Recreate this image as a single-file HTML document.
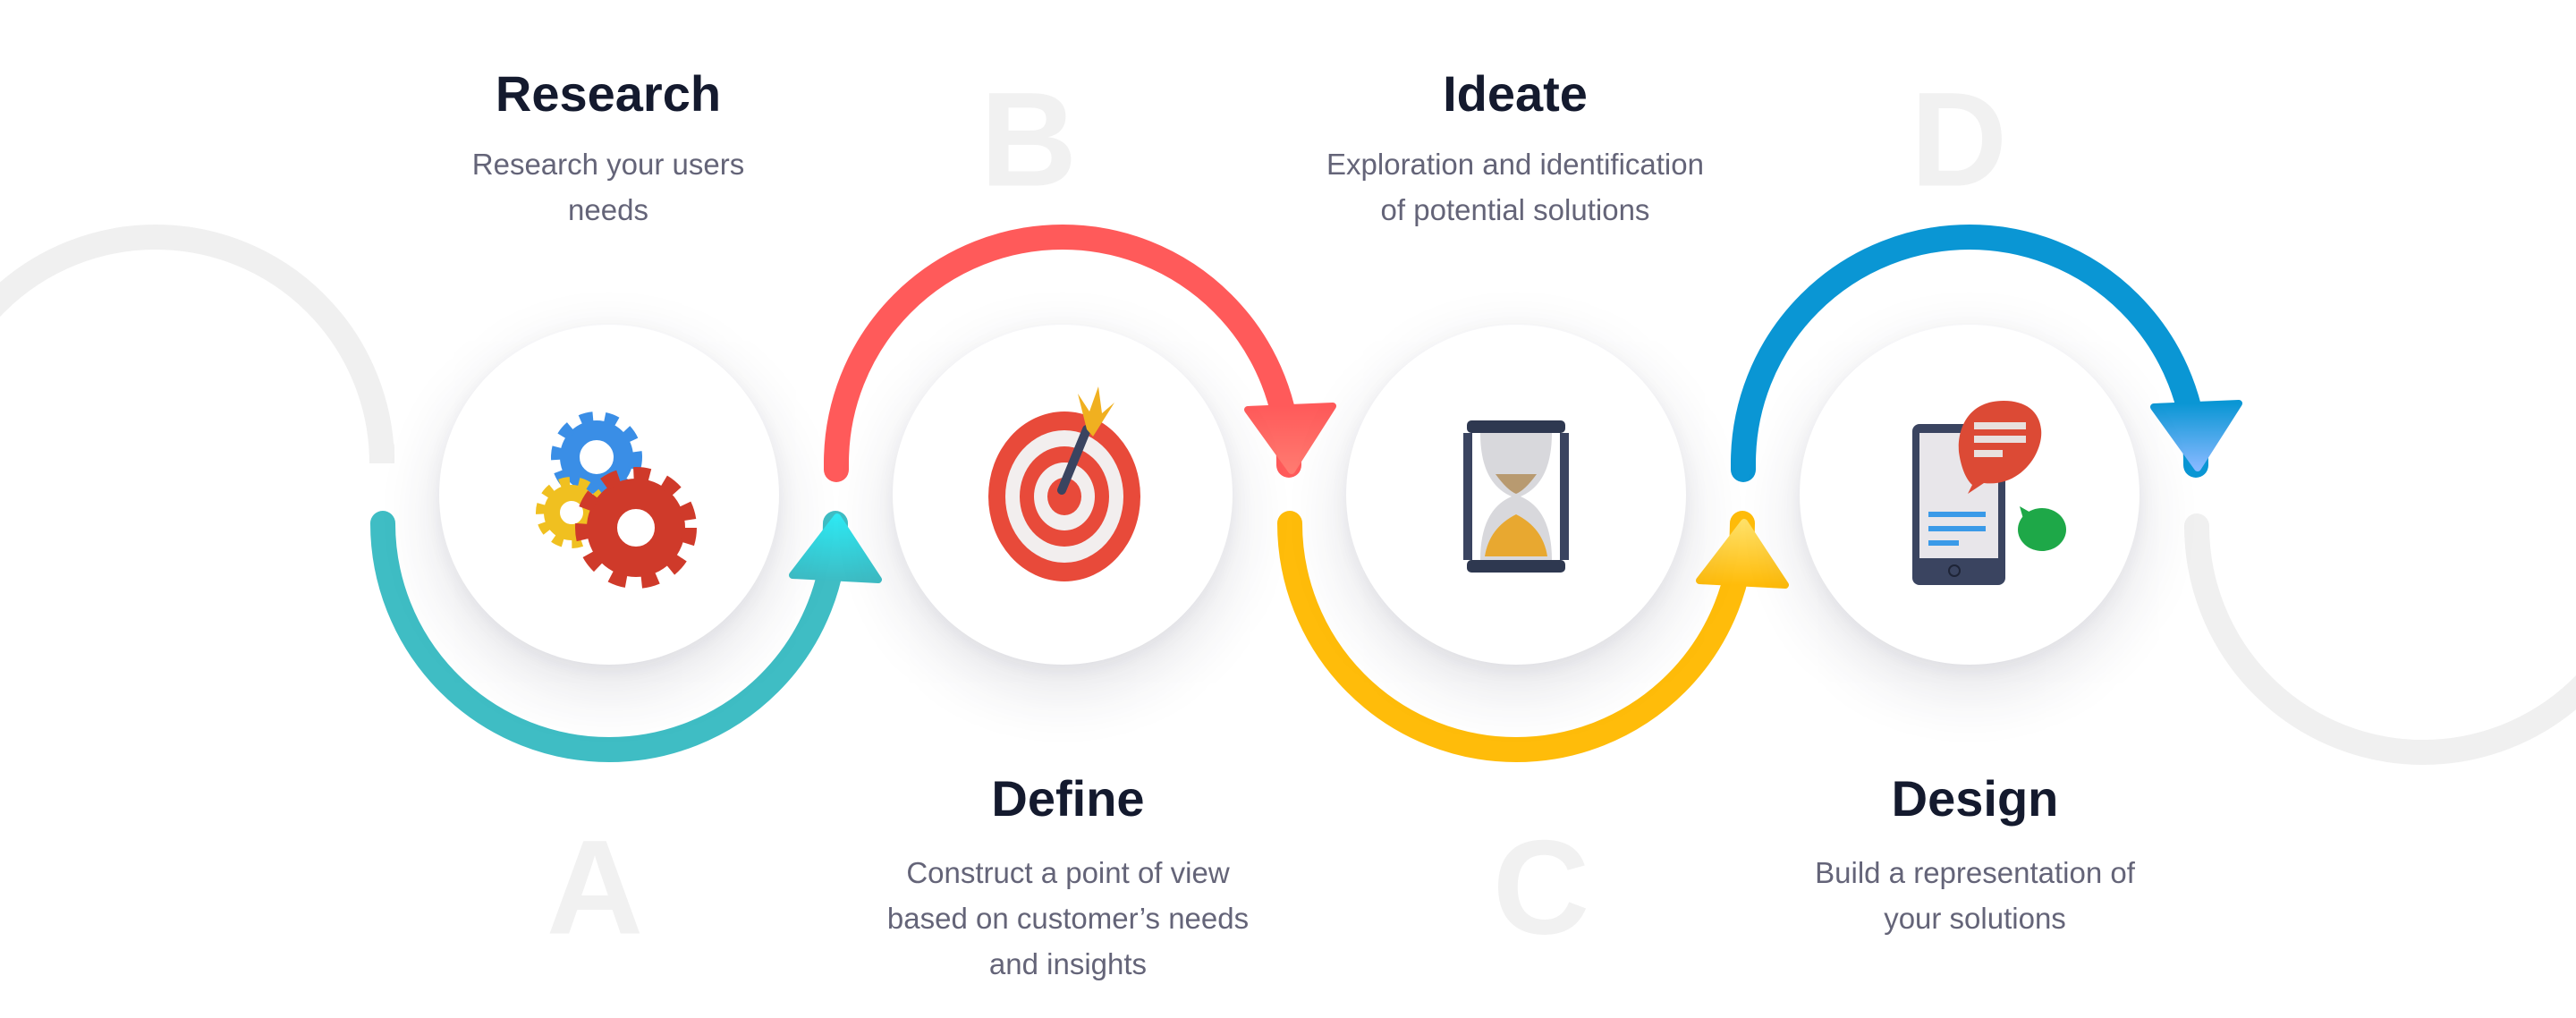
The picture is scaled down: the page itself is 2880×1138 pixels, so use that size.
<!DOCTYPE html>
<html><head><meta charset="utf-8"><style>
html,body{margin:0;padding:0;background:#fff;}
body{width:2880px;height:1138px;position:relative;overflow:hidden;font-family:"Liberation Sans",sans-serif;}
.t{position:absolute;transform:translateX(-50%);text-align:center;white-space:nowrap;}
.h{font-weight:bold;font-size:56px;color:#141a2e;line-height:64px;}
.d{font-size:33px;color:#646478;line-height:51px;}
.L{position:absolute;transform:translate(-50%,-50%);font-weight:bold;font-size:150px;color:#f1f1f1;}
.c{position:absolute;width:380px;height:380px;border-radius:50%;background:#fff;box-shadow:0 25px 70px rgba(40,40,70,.14),0 5px 20px rgba(40,40,70,.05);}
svg{position:absolute;left:0;top:0;}
</style></head><body>
<div class="L" style="left:1150px;top:156px">B</div>
<div class="L" style="left:2190px;top:156px">D</div>
<div class="L" style="left:665px;top:992px">A</div>
<div class="L" style="left:1723px;top:992px">C</div>

<svg width="2880" height="1138" viewBox="0 0 2880 1138">
<defs>
<linearGradient id="gt" x1="0" y1="0" x2="0" y2="1"><stop offset="0" stop-color="#2ee8f2"/><stop offset="1" stop-color="#3dbdc5"/></linearGradient>
<linearGradient id="gr" x1="0" y1="0" x2="0" y2="1"><stop offset="0" stop-color="#ff5a5a"/><stop offset="1" stop-color="#ff7a70"/></linearGradient>
<linearGradient id="gy" x1="0" y1="0" x2="0" y2="1"><stop offset="0" stop-color="#ffe066"/><stop offset="1" stop-color="#ffbc0a"/></linearGradient>
<linearGradient id="gb" x1="0" y1="0" x2="0" y2="1"><stop offset="0" stop-color="#0a96d4"/><stop offset="1" stop-color="#85b8ff"/></linearGradient>
</defs>
<g fill="none" stroke-width="28" stroke-linecap="round">
<path d="M -79 518 A 253 253 0 0 1 427 518 L427 500" stroke="#f0f0f0"/>
<path d="M 2456 588 A 253 253 0 0 0 2962 588" stroke="#f0f0f0"/>
<path d="M 428 585 A 253 253 0 0 0 934 585" stroke="#3fbdc4"/>
<path d="M 935 525 L935 518 A 253 253 0 0 1 1441 518 L1441 520" stroke="#ff5a5a"/>
<path d="M 1442 585 A 253 253 0 0 0 1948 585" stroke="#ffbc0a"/>
<path d="M 1949 525 L1949 518 A 253 253 0 0 1 2455 518 L2455 520" stroke="#0a96d4"/>
</g>
<path d="M936 578 L982 648 L886 643 Z" fill="url(#gt)" stroke="url(#gt)" stroke-width="8" stroke-linejoin="round"/>
<path d="M1444 526 L1395 458 L1490 454 Z" fill="url(#gr)" stroke="url(#gr)" stroke-width="8" stroke-linejoin="round"/>
<path d="M1950 584 L1996 654 L1900 649 Z" fill="url(#gy)" stroke="url(#gy)" stroke-width="8" stroke-linejoin="round"/>
<path d="M2457 523 L2408 455 L2503 451 Z" fill="url(#gb)" stroke="url(#gb)" stroke-width="8" stroke-linejoin="round"/>
</svg>

<div class="c" style="left:491px;top:363px"></div>
<div class="c" style="left:998px;top:363px"></div>
<div class="c" style="left:1505px;top:363px"></div>
<div class="c" style="left:2012px;top:363px"></div>

<svg width="2880" height="1138" viewBox="0 0 2880 1138">
<g>
<circle cx="667" cy="511" r="30" fill="none" stroke="#3a8ee6" stroke-width="22"/>
<circle cx="667" cy="511" r="44" fill="none" stroke="#3a8ee6" stroke-width="14" stroke-dasharray="14 13"/>
<circle cx="639" cy="573" r="22" fill="none" stroke="#f0c020" stroke-width="18"/>
<circle cx="639" cy="573" r="34" fill="none" stroke="#f0c020" stroke-width="12" stroke-dasharray="11 10"/>
<circle cx="711" cy="590" r="38" fill="none" stroke="#cf3a2a" stroke-width="34"/>
<circle cx="711" cy="590" r="60" fill="none" stroke="#cf3a2a" stroke-width="16" stroke-dasharray="18 17"/>
</g>
<g>
<ellipse cx="1190" cy="555" rx="85" ry="95" fill="#e84a3a"/>
<ellipse cx="1190" cy="555" rx="66" ry="74" fill="#f2eeee"/>
<ellipse cx="1190" cy="555" rx="50" ry="56" fill="#e84a3a"/>
<ellipse cx="1190" cy="555" rx="34" ry="38" fill="#f2eeee"/>
<ellipse cx="1190" cy="555" rx="19" ry="21" fill="#e84a3a"/>
<line x1="1187" y1="548" x2="1215" y2="480" stroke="#3a4460" stroke-width="10" stroke-linecap="round"/>
<path d="M1215 480 L1205 440 L1218 460 L1228 432 L1232 462 L1246 450 L1222 488 Z" fill="#f0b020"/>
</g>
<g>
<rect x="1640" y="470" width="110" height="14" rx="5" fill="#2e3850"/>
<rect x="1640" y="626" width="110" height="14" rx="5" fill="#2e3850"/>
<rect x="1636" y="484" width="10" height="142" fill="#3a4460"/>
<rect x="1744" y="484" width="10" height="142" fill="#3a4460"/>
<path d="M1655 484 L1735 484 Q1735 540 1700 555 Q1735 570 1735 626 L1655 626 Q1655 570 1690 555 Q1655 540 1655 484 Z" fill="#d8d8dc"/>
<path d="M1672 530 L1718 530 Q1705 548 1695 552 Q1685 548 1672 530 Z" fill="#b89a70"/>
<path d="M1660 622 Q1665 590 1695 575 Q1725 590 1730 622 Z" fill="#e8a830"/>
</g>
<g>
<rect x="2138" y="474" width="104" height="180" rx="8" fill="#3a4460"/>
<rect x="2146" y="484" width="88" height="140" fill="#e8e6ea"/>
<circle cx="2185" cy="638" r="6" fill="none" stroke="#1e2436" stroke-width="2"/>
<rect x="2156" y="572" width="64" height="6" fill="#3a9ae8"/>
<rect x="2156" y="588" width="64" height="6" fill="#3a9ae8"/>
<rect x="2156" y="604" width="34" height="6" fill="#3a9ae8"/>
<path d="M2240 448 C2200 448 2188 480 2190 505 C2192 520 2197 535 2205 542 L2200 552 L2218 540 C2260 545 2285 505 2282 480 C2280 460 2265 448 2240 448 Z" fill="#dc4a35"/>
<rect x="2207" y="472" width="58" height="8" fill="#e8e0de"/>
<rect x="2207" y="487" width="58" height="8" fill="#e8e0de"/>
<rect x="2207" y="503" width="32" height="8" fill="#e8e0de"/>
<ellipse cx="2283" cy="592" rx="27" ry="24" fill="#1ea848"/>
<path d="M2262 580 L2258 566 L2272 574 Z" fill="#1ea848"/>
</g>
</svg>

<div class="t h" style="left:680px;top:73px">Research</div>
<div class="t d" style="left:680px;top:158px">Research your users<br>needs</div>
<div class="t h" style="left:1694px;top:73px">Ideate</div>
<div class="t d" style="left:1694px;top:158px">Exploration and identification<br>of potential solutions</div>
<div class="t h" style="left:1194px;top:861px">Define</div>
<div class="t d" style="left:1194px;top:950px">Construct a point of view<br>based on customer’s needs<br>and insights</div>
<div class="t h" style="left:2208px;top:861px">Design</div>
<div class="t d" style="left:2208px;top:950px">Build a representation of<br>your solutions</div>
</body></html>
